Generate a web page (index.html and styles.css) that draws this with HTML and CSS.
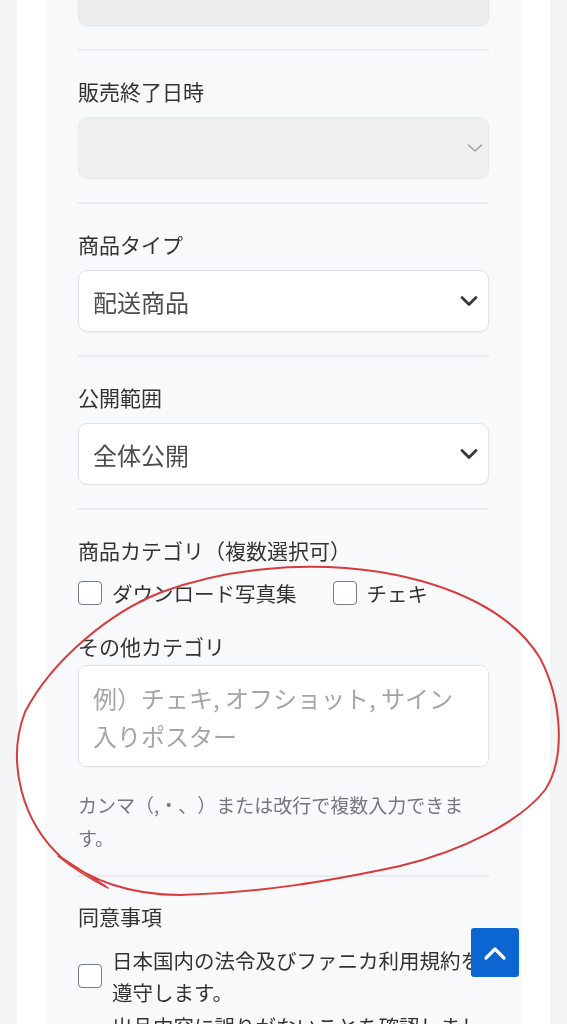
FILE: index.html
```html
<!DOCTYPE html>
<html lang="ja">
<head>
<meta charset="utf-8">
<title>商品登録</title>
<link rel="stylesheet" href="styles.css">
</head>
<body>
<div class="card">
  <form class="form">
    <section class="group group-first">
      <div class="control control-disabled"></div>
    </section>

    <section class="group">
      <label class="label">販売終了日時</label>
      <div class="select-wrap">
        <select class="control control-disabled select" disabled><option></option></select>
        <svg class="chevron chevron-thin" width="16" height="10" viewBox="0 0 16 10"><path d="M1.5 2 L8 8 L14.5 2" fill="none" stroke="#9a9a9a" stroke-width="1.3" stroke-linecap="round" stroke-linejoin="round"/></svg>
      </div>
    </section>

    <section class="group">
      <label class="label">商品タイプ</label>
      <div class="select-wrap">
        <select class="control select"><option>配送商品</option></select>
        <svg class="chevron" width="18" height="12" viewBox="0 0 18 12"><path d="M2 2.5 L9 9.5 L16 2.5" fill="none" stroke="#343a40" stroke-width="2.8" stroke-linecap="round" stroke-linejoin="round"/></svg>
      </div>
    </section>

    <section class="group">
      <label class="label">公開範囲</label>
      <div class="select-wrap">
        <select class="control select"><option>全体公開</option></select>
        <svg class="chevron" width="18" height="12" viewBox="0 0 18 12"><path d="M2 2.5 L9 9.5 L16 2.5" fill="none" stroke="#343a40" stroke-width="2.8" stroke-linecap="round" stroke-linejoin="round"/></svg>
      </div>
    </section>

    <section class="group group-cat">
      <label class="label">商品カテゴリ（複数選択可）</label>
      <div class="check-row">
        <label class="check"><input type="checkbox" class="box"><span>ダウンロード写真集</span></label>
        <label class="check"><input type="checkbox" class="box"><span>チェキ</span></label>
      </div>
      <label class="label sub-label">その他カテゴリ</label>
      <textarea class="textarea" placeholder="例）チェキ, オフショット, サイン入りポスター"></textarea>
      <p class="help">カンマ（,・、）または改行で複数入力できます。</p>
    </section>

    <section class="group group-agree">
      <label class="label">同意事項</label>
      <label class="agree"><input type="checkbox" class="box"><span>日本国内の法令及びファニカ利用規約を遵守します。</span></label>
      <label class="agree agree-next"><input type="checkbox" class="box"><span>出品内容に誤りがないことを確認しました。</span></label>
    </section>
  </form>
</div>

<svg class="annotation" width="567" height="1024" viewBox="0 0 567 1024">
  <path d="M62 858 C 90 880, 130 895, 180 895 C 260 893, 330 881, 400 866 C 462 851, 520 822, 545 790 C 566 758, 562 700, 540 658 C 512 612, 452 584, 380 572 C 300 560, 222 570, 162 592 C 110 612, 52 660, 25 712 C 6 762, 22 822, 62 858 L 105 886" fill="none" stroke="#d93a3c" stroke-width="2" stroke-linecap="round" stroke-linejoin="round"/>
  <path d="M58 856 C 75 870, 90 879, 108 888" fill="none" stroke="#d93a3c" stroke-width="1.6" stroke-linecap="round"/>
</svg>

<a class="to-top" href="#" aria-label="ページトップへ">
  <svg width="24" height="16" viewBox="0 0 24 16"><path d="M3 13 L12 4 L21 13" fill="none" stroke="#ffffff" stroke-width="3.2" stroke-linecap="round" stroke-linejoin="round"/></svg>
</a>
</body>
</html>
```

FILE: styles.css
```css
html, body {
  margin: 0;
  padding: 0;
}

body {
  background: #f3f4f6;
  padding: 0 17px;
  font-family: "Noto Sans CJK JP", "Noto Sans", sans-serif;
  color: #333333;
  height: 1024px;
  overflow: hidden;
  text-spacing-trim: space-all;
}

.card {
  background: #ffffff;
  padding: 0 28px;
  min-height: 1024px;
}

.form {
  background: #f8f9fb;
  padding: 0 33px;
  min-height: 1024px;
}

.group {
  padding: 25px 0 23px;
  border-bottom: 2px solid #e8eaed;
}

.group-first {
  padding-top: 0;
}

.group-first .control {
  margin-top: -36px;
}

.label {
  display: block;
  font-size: 21px;
  line-height: 30px;
  margin-bottom: 11px;
  color: #333333;
}

.control {
  display: block;
  box-sizing: border-box;
  width: 100%;
  height: 62px;
  border: 1px solid #dfe2e6;
  border-radius: 9px;
  background: #ffffff;
  box-shadow: 0 1px 2px rgba(0, 0, 0, 0.04);
}

.control-disabled {
  background: #ededee;
  border-color: #e4e5e7;
}

.select-wrap {
  position: relative;
}

.select {
  appearance: none;
  -webkit-appearance: none;
  padding: 0 40px 0 14px;
  font-family: "Noto Sans CJK JP", "Noto Sans", sans-serif;
  font-size: 24px;
  color: #4d4d4d;
  margin: 0;
  outline: none;
}

.chevron {
  position: absolute;
  right: 11px;
  top: 25px;
}

.chevron-thin {
  right: 6px;
  top: 26px;
}

.group-cat {
  padding-bottom: 21px;
}

.check-row {
  display: flex;
  align-items: center;
  gap: 36px;
  height: 34px;
}

.check {
  display: flex;
  align-items: center;
  gap: 10px;
  font-size: 20.5px;
  line-height: 34px;
  color: #333333;
}

.box {
  appearance: none;
  -webkit-appearance: none;
  box-sizing: border-box;
  width: 24px;
  height: 24px;
  margin: 0;
  border: 1.5px solid #777a7e;
  border-radius: 4px;
  background: #ffffff;
  flex: none;
}

.sub-label {
  margin-top: 21px;
  margin-bottom: 4px;
}

.textarea {
  display: block;
  box-sizing: border-box;
  width: 100%;
  height: 102px;
  margin: 0;
  padding: 13px 14px;
  border: 1px solid #dfe2e6;
  border-radius: 9px;
  background: #ffffff;
  font-family: "Noto Sans CJK JP", "Noto Sans", sans-serif;
  font-size: 24px;
  line-height: 38px;
  color: #333333;
  resize: none;
  box-shadow: 0 1px 2px rgba(0, 0, 0, 0.04);
}

.textarea::placeholder {
  color: #a3a5a8;
}

.help {
  margin: 21px 0 0;
  font-size: 19px;
  line-height: 33px;
  color: #74787c;
}

.group-agree {
  border-bottom: none;
  padding-top: 24px;
}

.agree {
  display: flex;
  align-items: center;
  gap: 10px;
  margin-top: 13px;
  font-size: 20.5px;
  line-height: 32px;
  color: #333333;
}

.agree-next {
  margin-top: 2px;
}

.annotation {
  position: absolute;
  left: 0;
  top: 0;
  pointer-events: none;
}

.to-top {
  position: fixed;
  left: 471px;
  top: 928px;
  width: 48px;
  height: 49px;
  background: #0c66d1;
  border-radius: 3px;
  display: flex;
  align-items: center;
  justify-content: center;
}
```
